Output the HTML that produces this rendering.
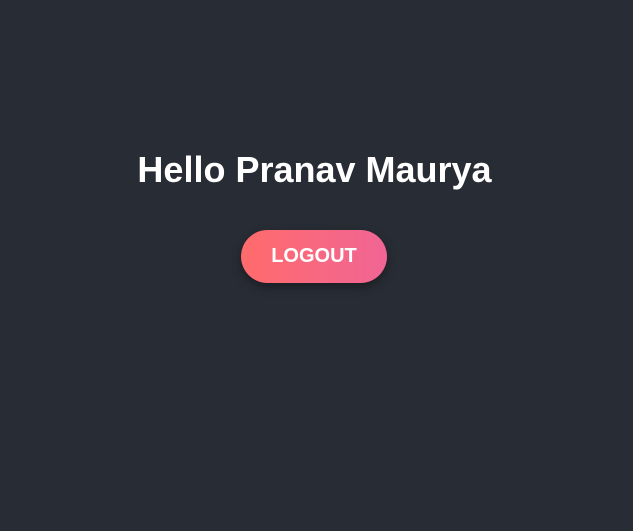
<!DOCTYPE html>
<html><head><style>
html,body{margin:0;padding:0;width:633px;height:531px;background:#282c34;overflow:hidden}
h1{position:absolute;left:0;width:629px;top:150px;margin:0;text-align:center;color:#fff;font:bold 36px/40px "Liberation Sans",sans-serif;letter-spacing:0px}
.btn{position:absolute;left:241px;top:230px;width:146px;height:53px;border-radius:27px;background:linear-gradient(90deg,#ff6b6b 0%,#f06595 100%);box-shadow:0 4px 10px rgba(0,0,0,.35);color:#fff;font:bold 20px/53px "Liberation Sans",sans-serif;text-align:center}
</style></head><body>
<h1>Hello Pranav Maurya</h1>
<div class="btn">LOGOUT</div>
</body></html>
